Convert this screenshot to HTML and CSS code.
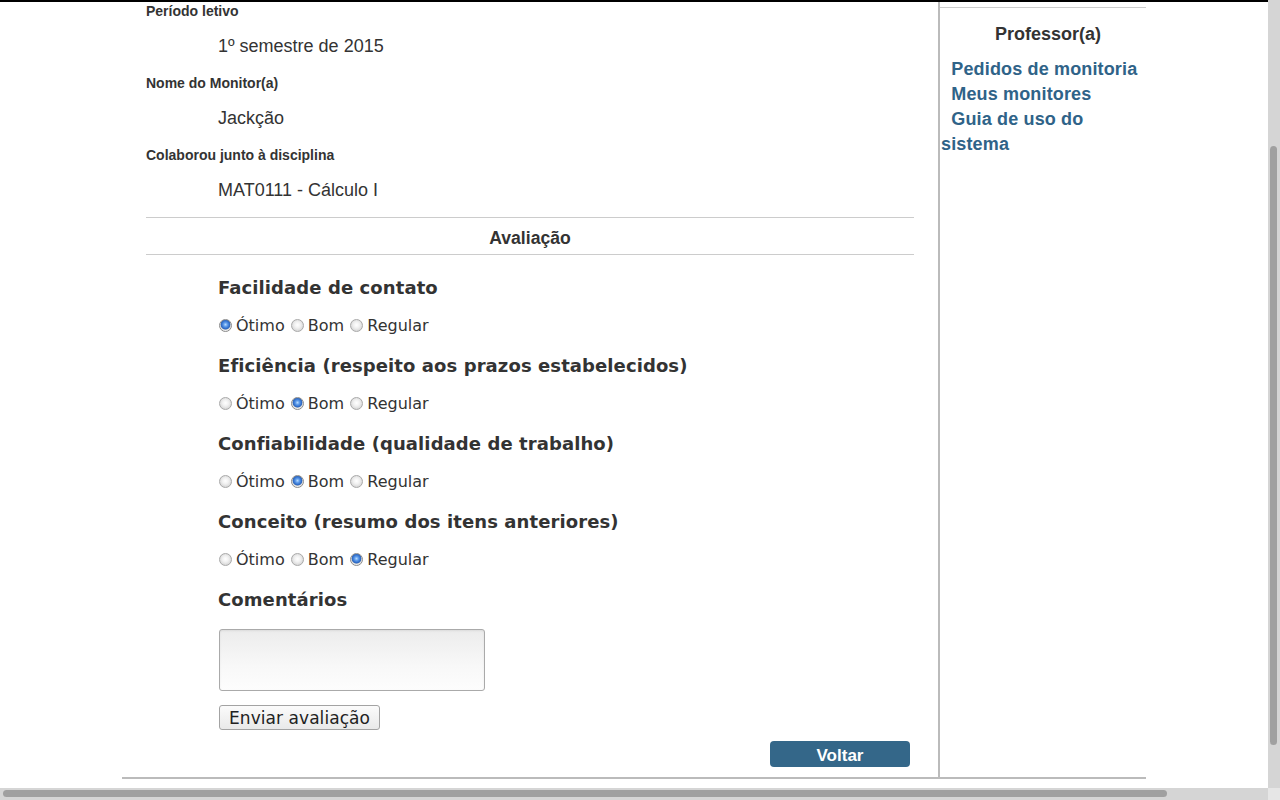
FILE: index.html
```html
<!DOCTYPE html>
<html lang="pt-BR">
<head>
<meta charset="utf-8">
<title>Avaliação do monitor</title>
<link rel="stylesheet" href="styles.css">
</head>
<body>
<div class="screen">
  <div class="viewport">
    <div class="page">
      <main class="main">
        <div class="info">
          <div class="field-label">Período letivo</div>
          <div class="field-value">1º semestre de 2015</div>
          <div class="field-label">Nome do Monitor(a)</div>
          <div class="field-value">Jackção</div>
          <div class="field-label">Colaborou junto à disciplina</div>
          <div class="field-value">MAT0111 - Cálculo I</div>
        </div>
        <h3 class="section-title">Avaliação</h3>
        <form class="form">
          <h4 class="question">Facilidade de contato</h4>
          <div class="options"><input class="radio" type="radio" name="q1" checked><label>Ótimo</label> <input class="radio" type="radio" name="q1"><label>Bom</label> <input class="radio" type="radio" name="q1"><label>Regular</label></div>
          <h4 class="question">Eficiência (respeito aos prazos estabelecidos)</h4>
          <div class="options"><input class="radio" type="radio" name="q2"><label>Ótimo</label> <input class="radio" type="radio" name="q2" checked><label>Bom</label> <input class="radio" type="radio" name="q2"><label>Regular</label></div>
          <h4 class="question">Confiabilidade (qualidade de trabalho)</h4>
          <div class="options"><input class="radio" type="radio" name="q3"><label>Ótimo</label> <input class="radio" type="radio" name="q3" checked><label>Bom</label> <input class="radio" type="radio" name="q3"><label>Regular</label></div>
          <h4 class="question">Conceito (resumo dos itens anteriores)</h4>
          <div class="options"><input class="radio" type="radio" name="q4"><label>Ótimo</label> <input class="radio" type="radio" name="q4"><label>Bom</label> <input class="radio" type="radio" name="q4" checked><label>Regular</label></div>
          <h4 class="question">Comentários</h4>
          <textarea class="comments"></textarea>
          <button class="submit" type="button">Enviar avaliação</button>
        </form>
        <div class="actions"><a class="btn-back" href="#">Voltar</a></div>
      </main>
      <aside class="side">
        <div class="side-rule"></div>
        <h3 class="side-title">Professor(a)</h3>
        <nav class="side-nav">
          <a class="side-link" href="#">&nbsp;&nbsp;Pedidos de monitoria</a>
          <a class="side-link" href="#">&nbsp;&nbsp;Meus monitores</a>
          <a class="side-link" href="#">&nbsp;&nbsp;Guia de uso do sistema</a>
        </nav>
      </aside>
    </div>
  </div>
  <div class="vscroll"><div class="vthumb"></div></div>
  <div class="hscroll"><div class="hthumb"></div></div>
  <div class="corner"></div>
</div>
</body>
</html>
```
FILE: styles.css
```css
html, body {
  margin: 0;
  padding: 0;
  overflow: hidden;
  background: #fff;
}

.screen {
  display: grid;
  grid-template-columns: 1268px 12px;
  grid-template-rows: 788px 12px;
  width: 1280px;
  height: 800px;
}

.viewport {
  border-top: 2px solid #000;
  padding-left: 122px;
  overflow: hidden;
  box-sizing: border-box;
}

.page {
  display: flex;
  width: 1024px;
  height: 775px;
  border-bottom: 2px solid #bbb;
  color: #333;
  font-family: "Liberation Sans", Arial, sans-serif;
}

.main {
  width: 768px;
  padding: 0 24px;
  border-right: 2px solid #bbb;
  display: flex;
  flex-direction: column;
}

.field-label {
  font-weight: 700;
  font-size: 14px;
  line-height: 18px;
}

.field-value {
  font-size: 18px;
  line-height: 24px;
  padding-left: 72px;
  margin: 14px 0 16px;
}

.field-value:last-child {
  margin-bottom: 0;
}

.section-title {
  margin: 15px 0 0;
  border-top: 1px solid #ccc;
  border-bottom: 1px solid #ccc;
  padding-top: 4px;
  line-height: 32px;
  font-size: 17.6px;
  font-weight: 700;
  text-align: center;
}

.form {
  margin: 21px 0 0;
  padding-left: 72px;
  display: flex;
  flex-direction: column;
  align-items: flex-start;
}

.question {
  margin: 0;
  font-family: "DejaVu Sans", sans-serif;
  font-weight: 700;
  font-size: 18px;
  line-height: 24px;
  letter-spacing: 0.09px;
}

.options {
  margin: 14px 0 16px;
  font-family: "DejaVu Sans", sans-serif;
  font-size: 16px;
  line-height: 24px;
}

.radio {
  appearance: none;
  -webkit-appearance: none;
  width: 13px;
  height: 13px;
  margin: 0 4px 0 1px;
  border: 1px solid #a9a9a9;
  border-radius: 50%;
  box-sizing: border-box;
  vertical-align: -1px;
  background: radial-gradient(circle at 50% 45%, #ffffff 0, #f1f1f1 3px, #d8d8d8 6px);
}

.radio:checked {
  border-color: #8a8a8a;
  background: radial-gradient(circle at 50% 42%, #b9dcff 0, #5d9bea 2px, #2f6cc9 4px, #3c6fb8 4.6px, #d9d9d9 5.2px, #f0f0f0 6px);
}

.comments {
  display: block;
  width: 266px;
  height: 62px;
  margin: 17px 0 0 1px;
  box-sizing: border-box;
  border: 1px solid #aaa;
  border-radius: 3px;
  background: linear-gradient(#ececec, #f8f8f8 60%, #fdfdfd);
  box-shadow: inset 0 1px 2px rgba(0, 0, 0, 0.08);
  resize: none;
}

.submit {
  margin: 14px 0 0 1px;
  height: 25px;
  padding: 0 9px;
  border: 1px solid #a3a3a3;
  border-radius: 3px;
  background: linear-gradient(#fbfbfb, #e9e9e9);
  font-family: "DejaVu Sans", sans-serif;
  font-size: 17px;
  line-height: 22px;
  letter-spacing: 0.06px;
  color: #222;
}

.actions {
  display: flex;
  justify-content: flex-end;
  margin-top: 11px;
  padding-right: 4px;
}

.btn-back {
  display: block;
  width: 140px;
  height: 26px;
  border-radius: 4px;
  background: #346789;
  color: #fff;
  text-align: center;
  font-weight: 700;
  font-size: 17px;
  line-height: 29px;
  text-decoration: none;
}

.side {
  width: 206px;
  padding-top: 5px;
}

.side-rule {
  border-top: 1px solid #ccc;
}

.side-title {
  margin: 14px 0 0;
  padding-left: 10px;
  text-align: center;
  font-size: 18px;
  line-height: 24px;
  font-weight: 700;
  color: #333;
}

.side-nav {
  margin-top: 11px;
  padding-left: 1px;
}

.side-link {
  display: block;
  font-size: 18px;
  line-height: 25px;
  font-weight: 700;
  letter-spacing: 0.15px;
  color: #2f6388;
  text-decoration: none;
}

.vscroll {
  background: #d5d5d5;
  padding-top: 146px;
}

.vthumb {
  width: 7px;
  height: 599px;
  margin-left: 2px;
  border-radius: 4px;
  background: #a0a0a0;
}

.hscroll {
  background: #d5d5d5;
  padding: 2px 0 0 3px;
  box-sizing: border-box;
}

.hthumb {
  width: 1164px;
  height: 7px;
  border-radius: 4px;
  background: #a0a0a0;
}

.corner {
  background: #e6e6e6;
}
```
